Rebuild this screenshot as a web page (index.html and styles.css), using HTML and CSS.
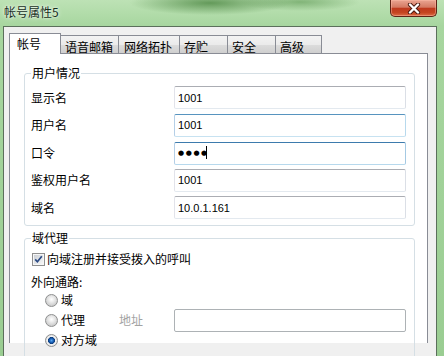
FILE: index.html
```html
<!DOCTYPE html>
<html>
<head>
    <title>帐号属性5</title>
    <link rel="stylesheet" href="styles.css">
</head>
<body>
    <div class="titlebar">
        <span class="title">帐号属性5</span>
        <span class="close">
            <svg width="14" height="11" viewBox="0 0 14 11">
                <path d="M3 1.5 L11 9.5 M11 1.5 L3 9.5" stroke="#4a1a10" stroke-width="4.2" stroke-linecap="round"/>
                <path d="M3 1.5 L11 9.5 M11 1.5 L3 9.5" stroke="#fff" stroke-width="2.4" stroke-linecap="round"/>
            </svg>
        </span>
    </div>
    <div class="window">
        <div class="tabs">
            <span class="tab active tab-account">帐号</span>
            <span class="tab tab-voice">语音邮箱</span>
            <span class="tab tab-topo">网络拓扑</span>
            <span class="tab tab-small">存贮</span>
            <span class="tab tab-small">安全</span>
            <span class="tab tab-adv">高级</span>
        </div>
        <div class="panel">
            <fieldset class="group">
                <legend>用户情况</legend>
                <div class="row">
                    <label for="displayName">显示名</label>
                    <input class="text" id="displayName" value="1001">
                </div>
                <div class="row">
                    <label for="userName">用户名</label>
                    <input class="text hover" id="userName" value="1001">
                </div>
                <div class="row">
                    <label for="password">口令</label>
                    <span class="pw-wrap">
                        <input class="text focused password" id="password" value="●●●●">
                        <span class="caret"></span>
                    </span>
                </div>
                <div class="row">
                    <label for="authName">鉴权用户名</label>
                    <input class="text" id="authName" value="1001">
                </div>
                <div class="row">
                    <label for="domain">域名</label>
                    <input class="text" id="domain" value="10.0.1.161">
                </div>
            </fieldset>
            <fieldset class="group proxy">
                <legend>域代理</legend>
                <div class="check-row">
                    <span class="check">
                        <svg width="13" height="13" viewBox="0 0 13 13">
                            <defs>
                                <linearGradient id="boxGrad" x1="0" y1="0" x2="1" y2="1">
                                    <stop offset="0" stop-color="#cbcfd5"/>
                                    <stop offset="1" stop-color="#f7f7f7"/>
                                </linearGradient>
                            </defs>
                            <rect x="0.5" y="0.5" width="12" height="12" fill="#f6f6f6" stroke="#8f8f8f"/>
                            <rect x="2" y="2" width="9" height="9" fill="url(#boxGrad)"/>
                            <path d="M3.2 6.4 L5.4 8.8 L9.8 3.3" stroke="#2b4a84" stroke-width="1.7" fill="none"/>
                        </svg>
                    </span>
                    <span>向域注册并接受拨入的呼叫</span>
                </div>
                <div class="caption">外向通路:</div>
                <div class="radio-row">
                    <span class="radio"></span>
                    <span>域</span>
                </div>
                <div class="radio-row">
                    <span class="radio-item">
                        <span class="radio"></span>
                        <span>代理</span>
                    </span>
                    <span class="addr-label">地址</span>
                    <input class="text disabled" disabled>
                </div>
                <div class="radio-row">
                    <span class="radio checked"></span>
                    <span>对方域</span>
                </div>
            </fieldset>
        </div>
    </div>
</body>
</html>
```

FILE: styles.css
```css
body {
    margin: 0;
    width: 444px;
    height: 356px;
    overflow: hidden;
    font-family: "Noto Sans CJK SC", "Liberation Sans", sans-serif;
    font-size: 12px;
    color: #000;
    background:
        radial-gradient(ellipse 80px 12px at 210px 3px, rgba(70, 130, 60, 0.75), transparent),
        radial-gradient(ellipse 60px 9px at 300px 2px, rgba(90, 150, 80, 0.6), transparent),
        linear-gradient(#bde2b5, #a7d69f 26px, #9acd92);
}
.titlebar {
    height: 26px;
    display: flex;
    justify-content: space-between;
    align-items: flex-start;
}
.title {
    padding: 5px 0 0 4px;
    line-height: 14px;
    color: #17301d;
    text-shadow: 0 0 5px rgba(255, 255, 255, 0.9), 0 0 2px rgba(255, 255, 255, 0.8);
}
.close {
    width: 47px;
    height: 17px;
    box-sizing: border-box;
    margin-right: 7px;
    border: 1px solid #5e2315;
    border-top: none;
    border-radius: 0 0 5px 5px;
    background: linear-gradient(#eaa592, #d47a63 45%, #bf3a1e 52%, #c44520 78%, #dc6c45);
    box-shadow: inset 0 0 0 1px rgba(255, 190, 170, 0.45);
    display: flex;
    justify-content: center;
    align-items: center;
}
.window {
    margin: 0 7px 0 3px;
    height: 340px;
    box-sizing: border-box;
    border: 1px solid #5b6f5b;
    border-bottom: none;
    background-color: #f0f0f0;
    padding: 6px 8px 0 5px;
}
.tabs {
    display: flex;
    align-items: flex-end;
    height: 20px;
}
.tab {
    box-sizing: border-box;
    height: 18px;
    margin-left: -1px;
    padding: 4px 0 0 4px;
    line-height: 14px;
    border: 1px solid #898c95;
    border-bottom: none;
    background: linear-gradient(#f3f3f3, #ebebeb 50%, #dddddd 50%, #cfcfcf);
}
.tab.active {
    position: relative;
    z-index: 1;
    height: 21px;
    margin-left: 0;
    margin-bottom: -1px;
    padding: 3px 0 0 7px;
    background: #fff;
}
.tab-account {
    width: 52px;
}
.tab-voice {
    width: 59px;
}
.tab-topo {
    width: 62px;
    padding-left: 5px;
}
.tab-small {
    width: 49px;
}
.tab-adv {
    width: 47px;
}
.panel {
    height: 290px;
    box-sizing: border-box;
    border: 1px solid #898c95;
    border-bottom: none;
    background: #fff;
    padding: 12px 12px 0 14px;
}
.group {
    margin: 0;
    padding: 6px 8px 6px 6px;
    border: 1px solid #d5dfe5;
    border-radius: 3px;
    min-inline-size: 0;
}
.group legend {
    padding: 0 1px;
    line-height: 14px;
}
.proxy {
    margin-top: 5px;
    height: 140px;
    box-sizing: border-box;
}
.row {
    display: flex;
    align-items: center;
    height: 23px;
    margin-bottom: 4.5px;
}
.row:last-child {
    margin-bottom: 0;
}
.row label {
    width: 143px;
    line-height: 14px;
}
.text {
    box-sizing: border-box;
    width: 232px;
    height: 23px;
    margin: 0;
    padding: 0 3px;
    border: 1px solid;
    border-color: #abadb3 #dbdfe6 #e3e9ef #e2e3ea;
    border-radius: 2px;
    font-family: "Liberation Sans", sans-serif;
    font-size: 11px;
    color: #000;
    background: #fff;
    outline: none;
}
.text.hover {
    border-color: #5794bf #b7d9ed #c7e2f1 #b5cfe7;
}
.text.focused {
    border-color: #3d7bad #a4c9e3 #b7d9ed #b5cfe7;
}
.text.password {
    font-family: "DejaVu Sans", sans-serif;
    font-size: 7px;
    letter-spacing: 1.6px;
}
.text.disabled {
    border-color: #adb2b5;
    background: #fff;
}
.pw-wrap {
    position: relative;
    display: block;
    height: 23px;
}
.caret {
    position: absolute;
    left: 32px;
    top: 5px;
    width: 1px;
    height: 13px;
    background: #000;
}
.check-row {
    display: flex;
    align-items: center;
    height: 16px;
    padding-left: 1px;
    line-height: 14px;
}
.check {
    display: flex;
    margin-right: 2px;
}
.caption {
    margin-top: 7px;
    height: 16px;
    line-height: 16px;
}
.radio-row {
    display: flex;
    align-items: center;
    height: 20px;
    padding-left: 14px;
    line-height: 14px;
}
.radio-item {
    display: flex;
    align-items: center;
    width: 74px;
}
.radio {
    width: 13px;
    height: 13px;
    box-sizing: border-box;
    margin-right: 3px;
    border: 1px solid #8e8f8f;
    border-radius: 50%;
    background: radial-gradient(circle at 50% 40%, #ffffff 0, #e9e9e9 3px, #cfcfcf 6px);
}
.radio.checked {
    background: radial-gradient(circle at 50% 50%, #5aa8ee 0, #1b64bd 1.8px, #0d3c7c 3.2px, #f4f4f4 3.8px, #dedede 6px);
}
.addr-label {
    width: 55px;
    color: #a3a3a3;
}
```
